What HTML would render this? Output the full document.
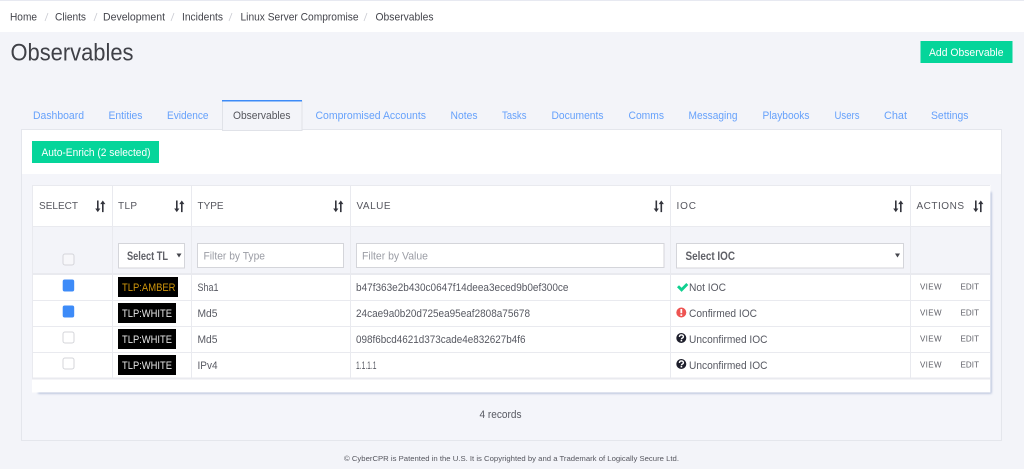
<!DOCTYPE html>
<html lang="en"><head><meta charset="utf-8"><title>Observables</title>
<style>
html,body{margin:0;padding:0;width:1024px;height:469px;overflow:hidden;background:#f3f4f9}
svg{display:block;filter:blur(.3px)}
text{font-family:"Liberation Sans",sans-serif;font-size:11px;fill:#575962}
.b text{fill:#44454c}.t text{fill:#66a1fb}
.h text{font-size:10px;fill:#55565e}
.w{fill:#fff;font-size:11px}
.l{fill:#e9eaef}.f{fill:#fff;stroke:#d4d5da}
.s{font-weight:bold;font-size:11.500px;fill:#5f6067}.ph{fill:#9b9da5}
.a{font-size:8px;fill:#5f6068}
</style></head><body>
<svg width="1024" height="469" viewBox="0 0 1024 469" xmlns="http://www.w3.org/2000/svg">
<defs>
<g id="sort" fill="#33343c"><path d="M2 0h1.6v8H5.4L2.8 11.6 .2 8H2z"/><path d="M7 11.6h1.6V3.6h1.8L7.8 0 5.2 3.6H7z"/></g>
<g id="q"><circle cx="5" cy="5" r="5" fill="#1d1e2b"/><path d="M3.100 3.900C3.200 2.600 4 1.900 5.100 1.900 6.300 1.900 7.100 2.700 7.100 3.700 7.100 5 5.100 5 5.100 6.200" fill="none" stroke="#fff" stroke-width="1.400"/><rect x="4.300" y="6.900" width="1.600" height="1.500" fill="#fff"/></g>
</defs>
<rect width="1024" height="469" fill="#f3f4f9"/>
<rect y="1" width="1024" height="31" fill="#fff"/>
<rect width="1024" height="1" fill="#e7e9f1"/>
<g class="b">
<text x="10" y="20.500" textLength="27" lengthAdjust="spacingAndGlyphs">Home</text>
<text x="55" y="20.500" textLength="31" lengthAdjust="spacingAndGlyphs">Clients</text>
<text x="103" y="20.500" textLength="62" lengthAdjust="spacingAndGlyphs">Development</text>
<text x="182" y="20.500" textLength="41" lengthAdjust="spacingAndGlyphs">Incidents</text>
<text x="240.500" y="20.500" textLength="118" lengthAdjust="spacingAndGlyphs">Linux Server Compromise</text>
<text x="375.500" y="20.500" textLength="58" lengthAdjust="spacingAndGlyphs">Observables</text>
</g>
<g fill="none" stroke="#c9cbd2" stroke-width=".8"><path d="M48 13l-3 8M97 13l-3 8M174 13l-3 8M232 13l-3 8M367 13l-3 8"/></g>
<text x="10.500" y="60.500" textLength="123" lengthAdjust="spacingAndGlyphs" style="font-size:24px;fill:#3f4047">Observables</text>
<rect x="920.500" y="41" width="92" height="22" fill="#05d59a"/>
<text x="929" y="56" textLength="74.500" lengthAdjust="spacingAndGlyphs" class="w">Add Observable</text>

<!-- tabs -->
<g class="t">
<text x="33" y="119" textLength="51" lengthAdjust="spacingAndGlyphs">Dashboard</text>
<text x="108.500" y="119" textLength="34" lengthAdjust="spacingAndGlyphs">Entities</text>
<text x="167" y="119" textLength="41.500" lengthAdjust="spacingAndGlyphs">Evidence</text>
<text x="315.500" y="119" textLength="110.500" lengthAdjust="spacingAndGlyphs">Compromised Accounts</text>
<text x="450.500" y="119" textLength="27" lengthAdjust="spacingAndGlyphs">Notes</text>
<text x="502" y="119" textLength="24.500" lengthAdjust="spacingAndGlyphs">Tasks</text>
<text x="551.500" y="119" textLength="52" lengthAdjust="spacingAndGlyphs">Documents</text>
<text x="628.500" y="119" textLength="35.500" lengthAdjust="spacingAndGlyphs">Comms</text>
<text x="688.500" y="119" textLength="49" lengthAdjust="spacingAndGlyphs">Messaging</text>
<text x="762.500" y="119" textLength="47" lengthAdjust="spacingAndGlyphs">Playbooks</text>
<text x="834.500" y="119" textLength="25" lengthAdjust="spacingAndGlyphs">Users</text>
<text x="884" y="119" textLength="23" lengthAdjust="spacingAndGlyphs">Chat</text>
<text x="931" y="119" textLength="37.500" lengthAdjust="spacingAndGlyphs">Settings</text>
</g>

<!-- card -->
<rect x="21.500" y="129.500" width="980" height="311" fill="#f4f5fa" stroke="#e4e6ec"/>
<rect x="22" y="130" width="979" height="44" fill="#fff"/>
<rect x="222.500" y="101" width="79.500" height="29.500" fill="#f3f4f9" stroke="#e0e2e8"/>
<rect x="222" y="100" width="80" height="1.500" fill="#3d8bf8"/>
<text x="233" y="119" textLength="57.500" lengthAdjust="spacingAndGlyphs" style="fill:#55565d">Observables</text>
<rect x="32" y="141" width="127" height="22" fill="#05d59a"/>
<text x="41.500" y="156" textLength="109" lengthAdjust="spacingAndGlyphs" class="w">Auto-Enrich (2 selected)</text>

<!-- table -->
<rect x="38" y="192" width="953.500" height="201.500" fill="#aab6d4" style="filter:blur(1px)"/>
<rect x="32" y="185" width="958.500" height="207.500" fill="#fff"/>
<rect x="33" y="227" width="957" height="46" fill="#f3f4f9"/>
<rect class="l" x="32" y="185" width="958" height="1"/>
<rect class="l" x="32" y="226" width="958" height="1"/>
<rect class="l" x="32" y="273" width="958" height="2"/>
<rect class="l" x="32" y="300" width="958" height="1"/>
<rect class="l" x="32" y="326" width="958" height="1"/>
<rect class="l" x="32" y="352" width="958" height="1"/>
<rect class="l" x="32" y="377.500" width="958" height="2"/>
<g class="l">
<rect x="32" y="185" width="1" height="193"/><rect x="112" y="185" width="1" height="193"/><rect x="191" y="185" width="1" height="193"/><rect x="350" y="185" width="1" height="193"/><rect x="670" y="185" width="1" height="193"/><rect x="910" y="185" width="1" height="193"/>
</g>
<g class="h">
<text x="39" y="209" textLength="39" lengthAdjust="spacing">SELECT</text>
<text x="118" y="209" textLength="19" lengthAdjust="spacing">TLP</text>
<text x="197.500" y="209" textLength="26" lengthAdjust="spacing">TYPE</text>
<text x="356.500" y="209" textLength="34" lengthAdjust="spacing">VALUE</text>
<text x="676.500" y="209" textLength="19.500" lengthAdjust="spacing">IOC</text>
<text x="916.500" y="209" textLength="47.500" lengthAdjust="spacing">ACTIONS</text>
</g>
<use href="#sort" x="95" y="200.500"/><use href="#sort" x="174" y="200.500"/><use href="#sort" x="333" y="200.500"/><use href="#sort" x="653.500" y="200.500"/><use href="#sort" x="893" y="200.500"/><use href="#sort" x="973" y="200.500"/>

<!-- filters -->
<rect x="63" y="254" width="11" height="11" rx="2" fill="#f7f7fa" stroke="#d4d5da"/>
<rect class="f" x="118.500" y="243.500" width="66" height="24.500"/>
<text x="127" y="260" textLength="41" lengthAdjust="spacingAndGlyphs" class="s">Select TL</text>
<path d="M176.500 253.500h5l-2.500 4z" fill="#44454c"/>
<rect class="f" x="197.500" y="243.500" width="146" height="24"/>
<text x="203.500" y="259.500" textLength="61.500" lengthAdjust="spacingAndGlyphs" class="ph">Filter by Type</text>
<rect class="f" x="356.500" y="243.500" width="307.500" height="24"/>
<text x="362" y="259.500" textLength="66" lengthAdjust="spacingAndGlyphs" class="ph">Filter by Value</text>
<rect class="f" x="676.500" y="243.500" width="227" height="24.500"/>
<text x="685.500" y="260" textLength="49.500" lengthAdjust="spacingAndGlyphs" class="s">Select IOC</text>
<path d="M895 253.500h5l-2.500 4z" fill="#44454c"/>

<!-- checkboxes -->
<rect x="62.700" y="279.500" width="11.500" height="12" rx="2" fill="#3d8bf8"/>
<rect x="62.700" y="305.500" width="11.500" height="12" rx="2" fill="#3d8bf8"/>
<rect x="63" y="332" width="11" height="11" rx="2" fill="#fff" stroke="#d4d5da"/>
<rect x="63" y="358" width="11" height="11" rx="2" fill="#fff" stroke="#d4d5da"/>

<!-- TLP -->
<rect x="118" y="277" width="60" height="20" fill="#000"/>
<rect x="118" y="303" width="58" height="20" fill="#000"/>
<rect x="118" y="329" width="58" height="20" fill="#000"/>
<rect x="118" y="355" width="58" height="20" fill="#000"/>
<text x="122" y="291" textLength="53.500" lengthAdjust="spacingAndGlyphs" style="fill:#cf960c">TLP:AMBER</text>
<text x="122" y="317" textLength="50" lengthAdjust="spacingAndGlyphs" style="fill:#e6e6e6">TLP:WHITE</text>
<text x="122" y="343" textLength="50" lengthAdjust="spacingAndGlyphs" style="fill:#e6e6e6">TLP:WHITE</text>
<text x="122" y="369" textLength="50" lengthAdjust="spacingAndGlyphs" style="fill:#e6e6e6">TLP:WHITE</text>

<!-- types -->
<text x="197.500" y="291" textLength="21" lengthAdjust="spacingAndGlyphs">Sha1</text>
<text x="197.500" y="317" textLength="20" lengthAdjust="spacingAndGlyphs">Md5</text>
<text x="197.500" y="343" textLength="20" lengthAdjust="spacingAndGlyphs">Md5</text>
<text x="197.500" y="369" textLength="20" lengthAdjust="spacingAndGlyphs">IPv4</text>

<!-- values -->
<text x="356" y="291" textLength="212.500" lengthAdjust="spacingAndGlyphs">b47f363e2b430c0647f14deea3eced9b0ef300ce</text>
<text x="356" y="317" textLength="174" lengthAdjust="spacingAndGlyphs">24cae9a0b20d725ea95eaf2808a75678</text>
<text x="356" y="343" textLength="169.500" lengthAdjust="spacingAndGlyphs">098f6bcd4621d373cade4e832627b4f6</text>
<text x="356" y="369" textLength="20.500" lengthAdjust="spacingAndGlyphs">1.1.1.1</text>

<!-- IOC -->
<path d="M677 287.200l2-2 2.600 2.600 4.700-4.800 2 2-6.700 6.900z" fill="#0fd08f"/>
<text x="689" y="291" textLength="37" lengthAdjust="spacingAndGlyphs">Not IOC</text>
<circle cx="681.300" cy="312.500" r="5" fill="#ee5452"/><rect x="680.400" y="309" width="1.800" height="4.200" fill="#fff"/><rect x="680.400" y="314.300" width="1.800" height="1.600" fill="#fff"/>
<text x="689" y="317" textLength="68" lengthAdjust="spacingAndGlyphs">Confirmed IOC</text>
<use href="#q" x="676.300" y="333"/>
<text x="689" y="343" textLength="78.500" lengthAdjust="spacingAndGlyphs">Unconfirmed IOC</text>
<use href="#q" x="676.300" y="359"/>
<text x="689" y="369" textLength="78.500" lengthAdjust="spacingAndGlyphs">Unconfirmed IOC</text>

<!-- actions -->
<text class="a" x="920" y="289.500" textLength="21.500" lengthAdjust="spacing">VIEW</text><text class="a" x="960.500" y="289.500" textLength="18.500" lengthAdjust="spacing">EDIT</text>
<text class="a" x="920" y="315.500" textLength="21.500" lengthAdjust="spacing">VIEW</text><text class="a" x="960.500" y="315.500" textLength="18.500" lengthAdjust="spacing">EDIT</text>
<text class="a" x="920" y="341.500" textLength="21.500" lengthAdjust="spacing">VIEW</text><text class="a" x="960.500" y="341.500" textLength="18.500" lengthAdjust="spacing">EDIT</text>
<text class="a" x="920" y="367.500" textLength="21.500" lengthAdjust="spacing">VIEW</text><text class="a" x="960.500" y="367.500" textLength="18.500" lengthAdjust="spacing">EDIT</text>

<text x="479.500" y="418" textLength="42" lengthAdjust="spacingAndGlyphs">4 records</text>
<text x="344" y="461" textLength="335" lengthAdjust="spacingAndGlyphs" style="font-size:7.500px;fill:#55565e">© CyberCPR is Patented in the U.S. It is Copyrighted by and a Trademark of Logically Secure Ltd.</text>
</svg>
</body></html>
